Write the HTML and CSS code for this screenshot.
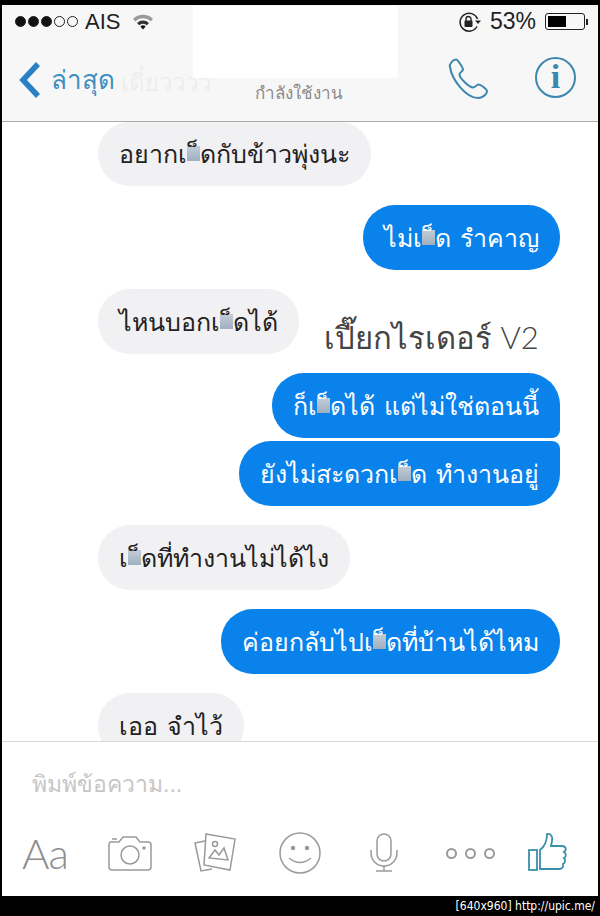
FILE: index.html
```html
<!DOCTYPE html>
<html lang="th">
<head>
    <meta charset="UTF-8">
    <meta name="viewport" content="width=device-width, initial-scale=1.0">
    <title>Messenger</title>
    <link rel="stylesheet" href="styles.css">
</head>
<body>
    <div class="screen">
        <!-- covers the contact name -->
        <div class="name-cover"></div>

        <header class="top">
            <div class="status-bar">
                <div class="signal">
                    <i class="dot on"></i><i class="dot on"></i><i class="dot on"></i><i class="dot"></i><i class="dot"></i>
                </div>
                <span class="carrier">AIS</span>
                <svg class="wifi" width="22" height="17" viewBox="0 0 22 17">
                    <path d="M1 6 A14 14 0 0 1 21 6 L18.6 8.4 A10.6 10.6 0 0 0 3.4 8.4 Z" fill="#9a9a9a"/>
                    <path d="M5 10 A8.6 8.6 0 0 1 17 10 L14.8 12.2 A5.4 5.4 0 0 0 7.2 12.2 Z" fill="#333"/>
                    <path d="M8.4 13.4 A3.8 3.8 0 0 1 13.6 13.4 L11 16.5 Z" fill="#111"/>
                </svg>
                <div class="status-right">
                    <svg class="lock" width="24" height="20" viewBox="0 0 24 20">
                        <path d="M19 14.5 A9 9 0 1 1 19.5 7" fill="none" stroke="#222" stroke-width="1.5"/>
                        <path d="M17 8.5 L23 8.5 L20 12 Z" fill="#222"/>
                        <rect x="6.5" y="8.5" width="8" height="6.5" rx="1" fill="#222"/>
                        <path d="M8 9 V7 A2.5 2.5 0 0 1 13 7 V9" fill="none" stroke="#222" stroke-width="1.4"/>
                    </svg>
                    <span class="percent">53%</span>
                    <div class="battery"><div class="battery-level"></div></div>
                    <div class="battery-nub"></div>
                </div>
            </div>
            <nav class="nav">
                <svg class="back" width="26" height="40" viewBox="0 0 26 40">
                    <path d="M21 4 L6 20 L21 36" fill="none" stroke="#2a80c6" stroke-width="5.5"/>
                </svg>
                <span class="back-label">ล่าสุด</span>
                <span class="ghost-title">เดี๋ยวววว</span>
                <span class="active-label">กำลังใช้งาน</span>
                <svg class="phone" width="42" height="42" viewBox="0 0 42 42">
                    <path d="M3 9 C2 6 6 1.500 9 1.500 C11 1.500 16 10 16 11.500 C16 13.500 12.500 14 12.500 16.500 C12.500 20 22 29.500 26 29.500 C28.500 29.500 29.500 26.500 31.500 26.500 C33.500 26.500 40 31 40 33.500 C40 36.500 35 40 31 40 C19 40 5 22 3 9 Z" fill="none" stroke="#3b87ad" stroke-width="2"/>
                </svg>
                <div class="info">i</div>
            </nav>
        </header>

        <main class="chat">
            <div class="bubble them clipped-top">อยากเ<span class="censor">&nbsp;</span>็ดกับข้าวพุ่งนะ</div>
            <div class="bubble me gap">ไม่เ<span class="censor">&nbsp;</span>็ด รำคาญ</div>
            <div class="bubble them gap">ไหนบอกเ<span class="censor">&nbsp;</span>็ดได้</div>
            <div class="bubble me gap first">ก็เ<span class="censor">&nbsp;</span>็ดได้ แต่ไม่ใช่ตอนนี้</div>
            <div class="bubble me last">ยังไม่สะดวกเ<span class="censor">&nbsp;</span>็ด ทำงานอยู่</div>
            <div class="bubble them gap">เ<span class="censor">&nbsp;</span>็ดที่ทำงานไม่ได้ไง</div>
            <div class="bubble me gap">ค่อยกลับไปเ<span class="censor">&nbsp;</span>็ดที่บ้านได้ไหม</div>
            <div class="bubble them gap">เออ จำไว้</div>
            <div class="watermark">เปี๊ยกไรเดอร์ V2</div>
        </main>

        <footer class="composer">
            <div class="placeholder">พิมพ์ข้อความ...</div>
            <div class="tools">
                <span class="aa">Aa</span>
                <svg class="tool-camera" width="44" height="36" viewBox="0 0 44 36" fill="none" stroke="#9a9a9a" stroke-width="1.500">
                    <path d="M3 7 H11 L15 2 H28 L32 7 H40 Q43 7 43 10 V32 Q43 35 40 35 H4 Q1 35 1 32 V10 Q1 7 3 7 Z"/>
                    <circle cx="22" cy="20" r="9"/>
                    <circle cx="36" cy="13" r="1" fill="#9a9a9a"/>
                    <path d="M4 4 H9"/>
                </svg>
                <svg class="tool-gallery" width="42" height="40" viewBox="0 0 42 40" fill="none" stroke="#9a9a9a" stroke-width="1.500">
                    <path d="M11 8 L1 10 L7 38 L18 36"/>
                    <path d="M12 1 L41 6 L36 37 L10 32 Z"/>
                    <circle cx="21" cy="11" r="2.500"/>
                    <path d="M15 25 L21 17 L25 22 L30 15 L34 27 Z"/>
                </svg>
                <svg class="tool-smile" width="42" height="42" viewBox="0 0 42 42" fill="none" stroke="#9a9a9a" stroke-width="1.500">
                    <circle cx="21" cy="21" r="20"/>
                    <circle cx="14" cy="16" r="1.500" fill="#9a9a9a"/>
                    <circle cx="28" cy="16" r="1.500" fill="#9a9a9a"/>
                    <path d="M10 26 Q21 35 32 26"/>
                </svg>
                <svg class="tool-mic" width="28" height="40" viewBox="0 0 28 40" fill="none" stroke="#9a9a9a" stroke-width="1.500">
                    <rect x="7" y="1" width="14" height="27" rx="7"/>
                    <path d="M1 17 V20 A13 13 0 0 0 27 20 V17"/>
                    <path d="M14 33 V38 M6 38 H22"/>
                </svg>
                <div class="more"><i></i><i></i><i></i></div>
                <svg class="tool-like" width="40" height="42" viewBox="0 0 40 42" fill="none" stroke="#3b8fa8" stroke-width="1.800">
                    <rect x="1" y="18" width="8" height="20"/>
                    <path d="M12 37 V18 C16 15 19 11 19 2 C23 1 25 5 24 9 L23 14 H34 C38 14 39 18 36 20 C39 22 38 25 36 26 C38 28 37 31 35 32 C36 35 34 37 31 37 Z"/>
                </svg>
            </div>
        </footer>
    </div>
    <div class="stamp">[640x960] http://upic.me/</div>
</body>
</html>
```

FILE: styles.css
```css
body {
    margin: 0;
    height: 916px;
    overflow: hidden;
    background-color: #000;
    font-family: "Liberation Sans", "Noto Sans", sans-serif;
}

.screen {
    position: relative;
    display: flex;
    flex-direction: column;
    height: 891px;
    margin: 5px 2px 0;
    background-color: #fff;
}

.name-cover {
    position: absolute;
    top: 1px;
    left: 191px;
    width: 205px;
    height: 72px;
    background-color: #fff;
}

/* top bars */
.top {
    flex: none;
    height: 117px;
    box-sizing: border-box;
    background-color: #f7f7f8;
    border-bottom: 1px solid #a9a9a9;
}

.status-bar {
    display: flex;
    align-items: center;
    height: 33px;
    padding: 0 10px 0 13px;
    color: #222;
}

.signal {
    display: flex;
    gap: 2px;
}

.dot {
    width: 11px;
    height: 11px;
    box-sizing: border-box;
    border: 1px solid #222;
    border-radius: 50%;
}

.dot.on {
    background-color: #111;
}

.carrier {
    margin-left: 7px;
    font-size: 22px;
}

.wifi {
    margin-left: 12px;
}

.status-right {
    display: flex;
    align-items: center;
    margin-left: auto;
}

.percent {
    margin-left: 8px;
    font-size: 23px;
}

.battery {
    width: 40px;
    height: 17px;
    box-sizing: border-box;
    margin-left: 9px;
    padding: 2px;
    border: 1px solid #222;
    border-radius: 3px;
}

.battery-level {
    width: 53%;
    height: 100%;
    background-color: #000;
}

.battery-nub {
    width: 2px;
    height: 6px;
    margin-left: 1px;
    background-color: #222;
}

.nav {
    display: flex;
    align-items: center;
    height: 83px;
}

.back {
    margin-left: 15px;
}

.back-label {
    margin-left: 8px;
    color: #3f8fc0;
    font-size: 26px;
}

.ghost-title {
    margin-left: 6px;
    margin-top: 6px;
    color: #eeeeef;
    font-size: 24px;
}

.active-label {
    margin-left: 44px;
    margin-top: 26px;
    color: #8a8a8a;
    font-size: 17px;
}

.phone {
    margin-left: auto;
    margin-top: -2px;
}

.info {
    width: 41px;
    height: 41px;
    box-sizing: border-box;
    margin: -4px 22px 0 46px;
    border: 2px solid #3b87ad;
    border-radius: 50%;
    color: #3b87ad;
    font-family: "Liberation Serif", serif;
    font-size: 34px;
    font-weight: bold;
    line-height: 36px;
    text-align: center;
}

/* messages */
.chat {
    position: relative;
    flex: 1;
    display: flex;
    flex-direction: column;
    min-height: 0;
    overflow: hidden;
}

.bubble {
    flex: none;
    display: flex;
    align-items: center;
    height: 65px;
    box-sizing: border-box;
    padding: 0 21px;
    border-radius: 32px;
    font-size: 25px;
    word-spacing: 2px;
    white-space: pre;
}

.bubble.clipped-top {
    height: 64px;
}

.bubble.them {
    align-self: flex-start;
    margin-left: 96px;
    background-color: #f1f0f2;
    color: #222;
}

.bubble.me {
    align-self: flex-end;
    margin-right: 38px;
    background-color: #0a82ec;
    color: #fff;
}

.bubble.gap {
    margin-top: 19px;
}

.bubble.last {
    margin-top: 3px;
    border-top-right-radius: 8px;
}

.bubble.first {
    border-bottom-right-radius: 8px;
}

.censor {
    padding: 0 2px;
    background: linear-gradient(#c3cdd7, #9fafc0) center / 100% 52% no-repeat;
}

.watermark {
    position: absolute;
    top: 191px;
    left: 322px;
    color: #444;
    font-family: "Lato", "Liberation Sans", sans-serif;
    font-size: 31px;
    font-weight: 300;
    white-space: nowrap;
}

/* composer */
.composer {
    flex: none;
    height: 155px;
    box-sizing: border-box;
    border-top: 1px solid #d9d9d9;
    background-color: #fff;
}

.placeholder {
    margin: 24px 0 0 30px;
    color: #c6c6c6;
    font-size: 23px;
}

.tools {
    display: flex;
    align-items: center;
    margin-top: 26px;
    padding-left: 20px;
}

.aa {
    width: 46px;
    color: #8e8e8e;
    font-family: "Lato", "Liberation Sans", sans-serif;
    font-size: 42px;
    font-weight: 300;
    letter-spacing: -1px;
}

.tool-camera {
    margin-left: 40px;
}

.tool-gallery {
    margin-left: 42px;
}

.tool-smile {
    margin-left: 43px;
}

.tool-mic {
    margin-left: 49px;
}

.more {
    display: flex;
    gap: 8px;
    margin-left: 48px;
}

.more i {
    width: 11px;
    height: 11px;
    box-sizing: border-box;
    border: 2px solid #9a9a9a;
    border-radius: 50%;
}

.tool-like {
    margin-left: 33px;
}

.stamp {
    padding-right: 5px;
    color: #fff;
    font-family: "DejaVu Sans", sans-serif;
    font-size: 12px;
    font-stretch: condensed;
    line-height: 20px;
    text-align: right;
}
```
